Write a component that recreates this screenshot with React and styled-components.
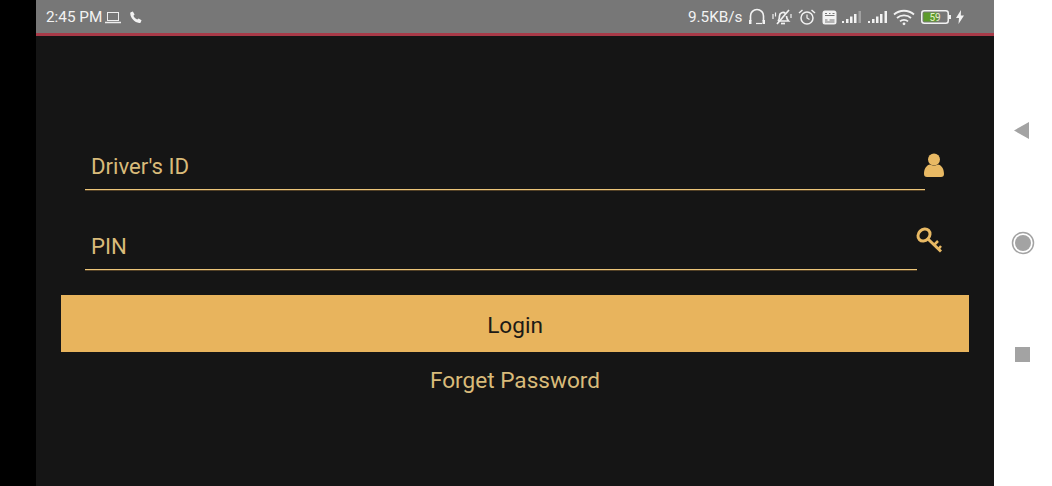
import styled, { createGlobalStyle } from 'styled-components';

const Global = createGlobalStyle`
    html, body {
        margin: 0;
        padding: 0;
        background: #000;
    }
    * {
        box-sizing: border-box;
    }
`;

const Page = styled.div`
    width: 1052px;
    height: 486px;
    display: flex;
    overflow: hidden;
    font-family: Roboto, "Liberation Sans", sans-serif;
`;

const LeftEdge = styled.div`
    width: 36px;
    background: #000;
`;

const Screen = styled.div`
    width: 958px;
    background: #151515;
    display: flex;
    flex-direction: column;
`;

const StatusBar = styled.div`
    height: 36px;
    background: #777;
    border-bottom: 3px solid #a83a48;
    display: flex;
    align-items: center;
    justify-content: space-between;
    padding: 1px 30px 0 10px;
    color: #f2f2f2;
    font-size: 15.3px;
`;

const StatusGroup = styled.div`
    display: flex;
    align-items: center;
    gap: ${p => p.$gap}px;
`;

const PhoneIcon = styled.svg`
    margin-left: 5px;
`;

const Form = styled.div`
    display: flex;
    flex-direction: column;
    padding: 107px 25px 0 25px;
`;

const Field = styled.div`
    display: flex;
    align-items: flex-start;
    height: ${p => p.$height}px;
    padding-left: 24px;
`;

const Input = styled.div`
    width: ${p => p.$width}px;
    height: 47px;
    padding: 10px 0 0 6px;
    border-bottom: 1px solid #ecc57a;
    box-shadow: 0 1px 0 rgba(230, 170, 80, 0.3);
    color: #d9bb7a;
    font-size: 22.2px;
    line-height: 26px;
`;

const FieldIcon = styled.svg`
    margin-left: -1px;
    margin-top: ${p => p.$top}px;
    flex: none;
`;

const LoginButton = styled.button`
    width: 908px;
    height: 57px;
    border: none;
    padding: 3px 0 0 0;
    background: #e8b45d;
    color: #1c1a16;
    font-family: inherit;
    font-size: 22.6px;
`;

const Forgot = styled.div`
    margin-top: 16px;
    text-align: center;
    color: #d9bb7a;
    font-size: 22.6px;
    line-height: 26px;
`;

const NavBar = styled.div`
    flex: 1;
    background: #fff;
    display: flex;
    flex-direction: column;
    align-items: center;
    padding: 122px 0 0 0;
`;

const NavIcon = styled.svg`
    display: block;
    margin-top: ${p => p.$top || 0}px;
    margin-left: ${p => p.$left || 0}px;
`;

function Laptop() {
    return (
        <svg width="16" height="13" viewBox="0 0 16 13" fill="none" stroke="#eee" strokeWidth="1">
            <rect x="2.5" y="1.5" width="11" height="8" />
            <path d="M0 11.5h16" strokeWidth="1.5" />
        </svg>
    );
}

function Phone() {
    return (
        <PhoneIcon width="14" height="14" viewBox="0 0 24 24" fill="#f2f2f2">
            <path d="M6.6 2.5l3 5-2 2.5c1.2 2.8 3.6 5.200 6.400 6.400l2.500-2 5 3-1.500 4c-.5.8-1.500 1.100-2.500 1C9.500 21 3 14.500 2.100 6.500c-.1-1 .2-2 1-2.500z" />
        </PhoneIcon>
    );
}

function Headset() {
    return (
        <svg width="18" height="18" viewBox="0 0 18 18" fill="none" stroke="#f2f2f2" strokeWidth="1.6">
            <path d="M2.500 13V8a6.500 6.500 0 0 1 13 0v5" />
            <rect x="1" y="12" width="2.500" height="4" fill="#f2f2f2" stroke="none" />
            <rect x="14.500" y="12" width="2.500" height="4" fill="#f2f2f2" stroke="none" />
            <path d="M8 15.500h6" strokeWidth="1.200" />
        </svg>
    );
}

function BellMuted() {
    return (
        <svg width="21" height="18" viewBox="0 0 21 18" fill="none" stroke="#f2f2f2" strokeWidth="1.700">
            <path d="M6 13c1.500-1.500 1.500-3 1.500-5a3.500 3.500 0 0 1 6 -2.500M14.500 8c0 2 .5 3.500 2 5H6" />
            <path d="M9 15.500h4" />
            <path d="M5 16L17 2" />
            <path d="M1 6v5M3.500 4.500v4M19 6v4" strokeWidth="1.200" />
        </svg>
    );
}

function Alarm() {
    return (
        <svg width="18" height="18" viewBox="0 0 18 18" fill="none" stroke="#f2f2f2" strokeWidth="1.500">
            <circle cx="9" cy="10" r="6" />
            <path d="M9 6.500V10l2.500 1.500" strokeWidth="1.200" />
            <path d="M1 5l3.500-3M17 5l-3.500-3" />
        </svg>
    );
}

function SimBadge() {
    return (
        <svg width="15" height="15" viewBox="0 0 15 15">
            <rect x="0.500" y="0.500" width="14" height="14" rx="2.500" fill="#f2f2f2" />
            <path d="M3 3.500h2M7 3.500h1.500M10.500 3.500h2M3 5.500h9.500M3 10h2.500M7.500 10h5M3 12h9.500" stroke="#777" strokeWidth="1" />
        </svg>
    );
}

function Signal({ dim }) {
    return (
        <svg width="20" height="14" viewBox="0 0 20 14" fill="#f2f2f2">
            <rect x="0" y="11" width="2" height="2" />
            <rect x="4" y="9" width="2.500" height="4" />
            <rect x="8" y="6.500" width="2.500" height="6.500" />
            <rect x="12" y="4" width="2.500" height="9" />
            <rect x="16.500" y="1" width="2.500" height="12" fillOpacity={dim ? 0.35 : 1} />
        </svg>
    );
}

function Wifi() {
    return (
        <svg width="22" height="17" viewBox="0 0 22 17" fill="none" stroke="#f2f2f2" strokeWidth="1.800">
            <path d="M1 5.500c5.500-5 14.500-5 20 0" />
            <path d="M4 9c3.800-3.400 10.200-3.400 14 0" />
            <path d="M7 12.300c2.200-2 5.800-2 8 0" />
            <circle cx="11" cy="14.800" r="1.400" fill="#f2f2f2" stroke="none" />
        </svg>
    );
}

function Battery() {
    return (
        <svg width="30" height="14" viewBox="0 0 30 14">
            <rect x="0.750" y="0.750" width="26.500" height="12.500" rx="2.500" fill="none" stroke="#f2f2f2" strokeWidth="1.500" />
            <rect x="2.500" y="2.500" width="14" height="9" fill="#5d9a2c" />
            <rect x="28" y="5" width="2" height="4" fill="#f2f2f2" />
            <text x="14" y="11" textAnchor="middle" fontSize="10" fontFamily="Roboto, sans-serif" fill="#e6f0c8">59</text>
        </svg>
    );
}

function Bolt() {
    return (
        <svg width="8" height="14" viewBox="0 0 8 14" fill="#f2f2f2">
            <path d="M5 0L0 8h3L2.500 14 8 5.500H4.800z" />
        </svg>
    );
}

export default function App() {
    return (
        <Page>
            <Global />
            <LeftEdge />
            <Screen>
                <StatusBar>
                    <StatusGroup $gap={3}>
                        <span>2:45 PM</span>
                        <Laptop />
                        <Phone />
                    </StatusGroup>
                    <StatusGroup $gap={5.5}>
                        <span>9.5KB/s</span>
                        <Headset />
                        <BellMuted />
                        <Alarm />
                        <SimBadge />
                        <Signal dim />
                        <Signal />
                        <Wifi />
                        <Battery />
                        <Bolt />
                    </StatusGroup>
                </StatusBar>
                <Form>
                    <Field $height={80}>
                        <Input $width={840}>Driver's ID</Input>
                        <FieldIcon $top={10} width="20" height="25" viewBox="0 0 20 25" fill="#e8b964">
                            <circle cx="10" cy="6.500" r="6" />
                            <path d="M0 21c0-6 3-9 6-9.500 2.500 1.500 5.500 1.500 8 0 3 .5 6 3.500 6 9.500 0 2-1 3-3 3H3c-2 0-3-1-3-3z" />
                        </FieldIcon>
                    </Field>
                    <Field $height={72}>
                        <Input $width={832}>PIN</Input>
                        <FieldIcon $top={4} width="27" height="27" viewBox="0 0 27 27" fill="none" stroke="#e8b964" strokeWidth="3">
                            <ellipse cx="8" cy="8" rx="5.500" ry="6.500" transform="rotate(45 8 8)" />
                            <path d="M12.500 12.500L25 24.500" />
                            <path d="M18 18l4-4M22.500 22l2.500-3" strokeWidth="2.500" />
                        </FieldIcon>
                    </Field>
                    <LoginButton>Login</LoginButton>
                    <Forgot>Forget Password</Forgot>
                </Form>
            </Screen>
            <NavBar>
                <NavIcon $left={-2} width="16" height="17" viewBox="0 0 16 17" fill="#a3a3a3">
                    <path d="M15 0v17L0 8.500z" />
                </NavIcon>
                <NavIcon $top={92} $left={-1} width="24" height="24" viewBox="0 0 24 24">
                    <circle cx="12" cy="12" r="10.500" fill="none" stroke="#a3a3a3" strokeWidth="1.500" />
                    <circle cx="12" cy="12" r="8" fill="#a3a3a3" />
                </NavIcon>
                <NavIcon $top={92} $left={-1} width="15" height="15" viewBox="0 0 15 15" fill="#a3a3a3">
                    <rect width="15" height="15" />
                </NavIcon>
            </NavBar>
        </Page>
    );
}
